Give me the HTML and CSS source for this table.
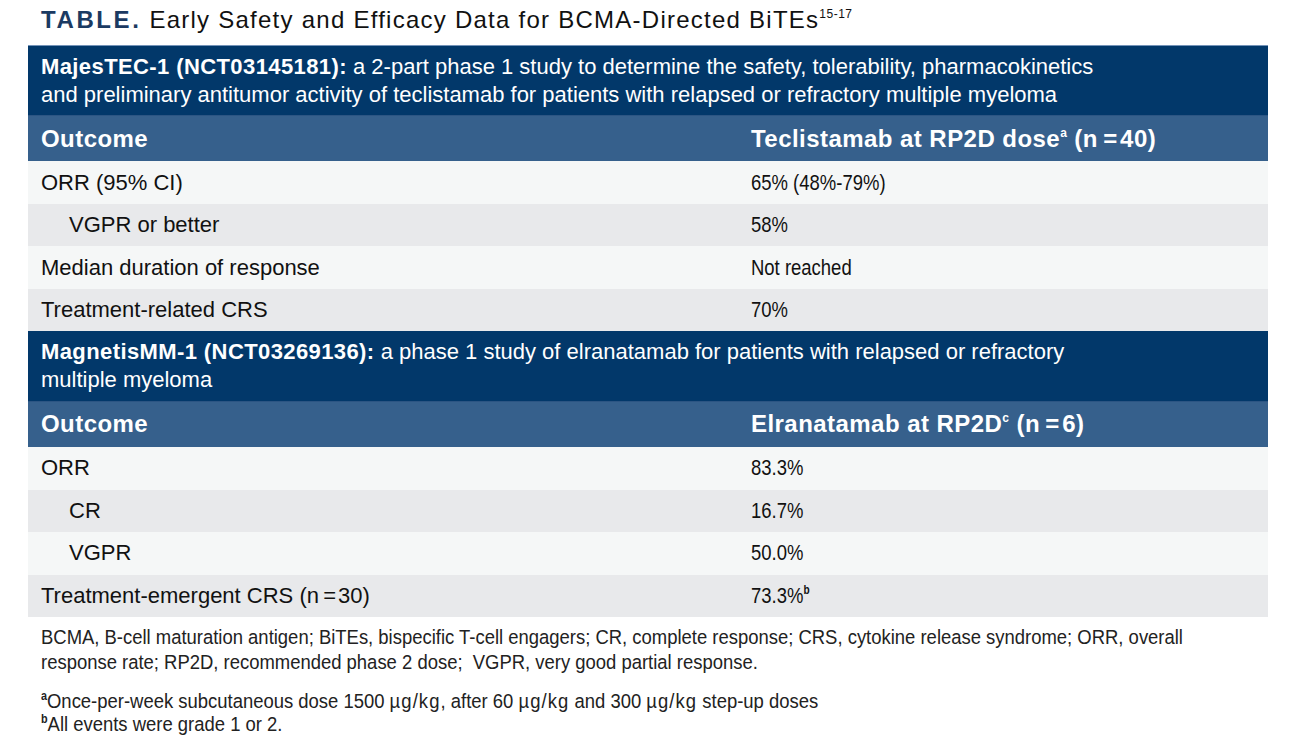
FILE: index.html
```html
<!DOCTYPE html>
<html>
<head>
<meta charset="utf-8">
<link rel="stylesheet" href="styles.css">
</head>
<body>
<div class="page">
  <h1 class="title"><span class="label">TABLE.</span> Early Safety and Efficacy Data for BCMA-Directed BiTEs<sup>15-17</sup></h1>
  <table class="data">
    <colgroup><col class="c1"><col class="c2"></colgroup>
    <tbody>
      <tr class="study"><td colspan="2"><b>MajesTEC-1 (NCT03145181):</b> a 2-part phase 1 study to determine the safety, tolerability, pharmacokinetics<br>and preliminary antitumor activity of teclistamab for patients with relapsed or refractory multiple myeloma</td></tr>
      <tr class="head"><th>Outcome</th><th>Teclistamab at RP2D dose<sup>a</sup> (n&#8201;=&#8202;40)</th></tr>
      <tr class="odd"><td>ORR (95% CI)</td><td><span class="cond">65% (48%-79%)</span></td></tr>
      <tr class="even"><td class="ind">VGPR or better</td><td><span class="cond">58%</span></td></tr>
      <tr class="odd"><td>Median duration of response</td><td><span class="cond">Not reached</span></td></tr>
      <tr class="even"><td>Treatment-related CRS</td><td><span class="cond">70%</span></td></tr>
      <tr class="study"><td colspan="2"><b>MagnetisMM-1 (NCT03269136):</b> a phase 1 study of elranatamab for patients with relapsed or refractory<br>multiple myeloma</td></tr>
      <tr class="head"><th>Outcome</th><th>Elranatamab at RP2D<sup>c</sup> (n&#8201;=&#8202;6)</th></tr>
      <tr class="odd"><td>ORR</td><td><span class="cond">83.3%</span></td></tr>
      <tr class="even"><td class="ind">CR</td><td><span class="cond">16.7%</span></td></tr>
      <tr class="odd"><td class="ind">VGPR</td><td><span class="cond">50.0%</span></td></tr>
      <tr class="even"><td>Treatment-emergent CRS (n&#8201;=&#8202;30)</td><td><span class="cond">73.3%<sup class="b">b</sup></span></td></tr>
    </tbody>
  </table>
  <div class="notes">
    <p class="abbr">BCMA, B-cell maturation antigen; BiTEs, bispecific T-cell engagers; CR, complete response; CRS, cytokine release syndrome; ORR, overall<br>response rate; RP2D, recommended phase 2 dose;&nbsp; VGPR, very good partial response.</p>
    <p class="foot"><sup class="b">a</sup>Once-per-week subcutaneous dose 1500 <span class="unit">µg/kg</span>, after 60 <span class="unit">µg/kg</span> and 300 <span class="unit">µg/kg</span> step-up doses<br><sup class="b">b</sup>All events were grade 1 or 2.</p>
  </div>
</div>
</body>
</html>
```

FILE: styles.css
```css
html, body {
  margin: 0;
  padding: 0;
  background: #ffffff;
}
.page {
  width: 1240px;
  padding: 5px 0 0 28px;
  font-family: "Liberation Sans", Arial, sans-serif;
  color: #111;
}
.title {
  margin: 0 0 0 13px;
  height: 40px;
  font-size: 24px;
  font-weight: normal;
  line-height: 30px;
  color: #111;
  letter-spacing: 1.25px;
}
.title .label {
  font-weight: bold;
  color: #1b3a62;
  letter-spacing: 2.6px;
}
.title sup {
  font-size: 12px;
  letter-spacing: 0.5px;
  vertical-align: 10px;
  line-height: 0;
}
.data {
  width: 1240px;
  border-collapse: collapse;
  border-top: 1px solid #7493b8;
}
.data .c1 { width: 710px; }
.data td, .data th {
  padding: 0 13px;
  text-align: left;
  font-size: 22px;
  vertical-align: middle;
}
.cond {
  display: inline-block;
  transform: scaleX(0.84);
  transform-origin: left center;
  white-space: nowrap;
}
.study td {
  background: #02386a;
  color: #fff;
  height: 70px;
  font-size: 22px;
  line-height: 28px;
  padding-top: 7px;
  padding-bottom: 6px;
  box-sizing: border-box;
}
.study b { letter-spacing: 0.4px; }
.head th {
  background: #36608c;
  color: #fff;
  font-size: 24px;
  font-weight: bold;
  height: 45px;
  letter-spacing: 0.45px;
  border-top: 1px solid #2c5583;
}
.head sup {
  font-size: 12px;
  vertical-align: 10px;
  line-height: 0;
}
.odd td { background: #f5f7f7; height: 43px; }
.even td { background: #e8e9eb; height: 42px; }
.data td.ind { padding-left: 41px; }
sup.b {
  font-size: 12px;
  font-weight: bold;
  vertical-align: 9px;
  line-height: 0;
}
.notes {
  padding-left: 13px;
  font-size: 20.5px;
  color: #222;
}
.notes p {
  margin: 0;
  width: 1400px;
  line-height: 25px;
  transform: scaleX(0.9);
  transform-origin: left top;
}
.abbr { padding-top: 7px; }
.foot { padding-top: 15px; line-height: 23px !important; }
.foot sup.b { font-size: 12px; vertical-align: 8px; }
.unit { letter-spacing: 1.2px; }
```
